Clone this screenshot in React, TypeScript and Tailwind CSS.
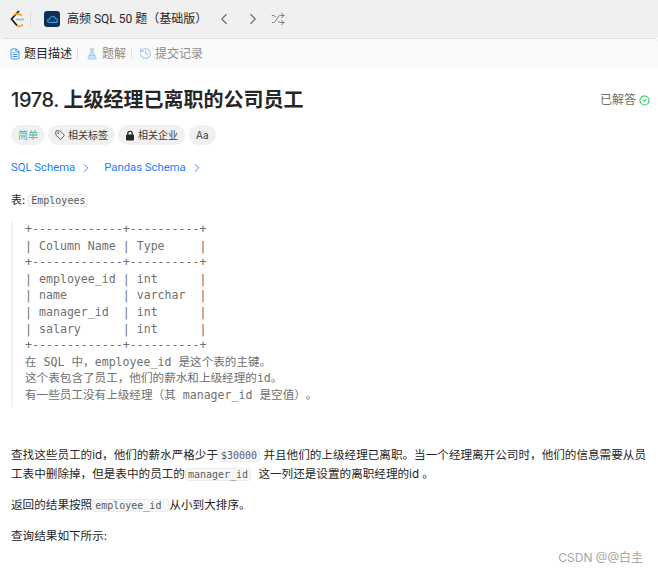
import { ChevronLeft, ChevronRight, Shuffle, Tag, FileText, FlaskConical, History, CircleCheck } from 'lucide-react';

const SANS = "font-['Inter','Noto_Sans_CJK_SC',sans-serif]";
const MONO = "font-['DejaVu_Sans_Mono','Noto_Sans_CJK_SC',monospace]";

function LeetcodeLogo() {
  return (
    <svg width="16" height="20" viewBox="0 0 16 20" fill="none" strokeWidth="1.7">
      <path d="M10 2 L2.5 10 L8 16.5" stroke="#1a1a1a" />
      <path d="M8 16.5 C10 18 12 17.5 14 15.5" stroke="#f89f1b" />
      <path d="M7 10.5 H15" stroke="#b3b3b3" />
      <path d="M5 6 C7 4.5 10 4.5 13 6.5" stroke="#f89f1b" />
    </svg>
  );
}

function PlanIcon() {
  return (
    <div className="flex h-4 w-4 items-center justify-center rounded-[3px] bg-[#0f2f55]">
      <svg width="13" height="10" viewBox="0 0 13 10" fill="none">
        <path d="M3.5 8.5 C1 8.5 1 5 3.5 5 C4 2 8.5 1.5 9.5 4.5 C12 4.5 12 8.5 9.5 8.5 Z" stroke="#29a9e1" strokeWidth="1.2" />
        <circle cx="5" cy="6.8" r="0.6" fill="#29a9e1" />
        <circle cx="8" cy="6.8" r="0.6" fill="#29a9e1" />
      </svg>
    </div>
  );
}

function LockIcon() {
  return (
    <svg width="10" height="11" viewBox="0 0 10 11" fill="none">
      <path d="M2.8 5 V3.4 C2.8 0.8 7.2 0.8 7.2 3.4 V5" stroke="#262626" strokeWidth="1.3" />
      <rect x="1" y="4.6" width="8" height="6" rx="1" fill="#262626" />
    </svg>
  );
}

function TopBar() {
  return (
    <div className="flex h-[38px] items-center bg-[#f0f0f0] pl-[9px]">
      <LeetcodeLogo />
      <div className="ml-[5px] h-[14px] w-px bg-[#dcdcdc]" />
      <div className="ml-[13px]"><PlanIcon /></div>
      <span className="ml-[7px] w-[132px] font-['Roboto','Noto_Sans_CJK_SC',sans-serif] text-xs whitespace-nowrap text-[#262626]">高频 SQL 50 题（基础版）</span>
      <ChevronLeft className="ml-[16px] text-[#6b6b6b]" size={18} strokeWidth={1.5} />
      <ChevronRight className="ml-[11px] text-[#6b6b6b]" size={18} strokeWidth={1.5} />
      <Shuffle className="ml-[9px] text-[#6b6b6b]" size={14} strokeWidth={1.5} />
    </div>
  );
}

function TabBar() {
  return (
    <div className="flex h-[30px] items-center rounded-t-[4px] border-t border-[#e0e0e0] bg-[#fafafa] pl-[9px] text-xs">
      <FileText size={12} className="text-[#3b93f0]" strokeWidth={2} />
      <span className="ml-[3px] text-[#262626]">题目描述</span>
      <div className="ml-[5px] h-[11px] w-px bg-[#e0e0e0]" />
      <FlaskConical size={12} fill="#cfe2f8" className="ml-[8px] text-[#a5c9f3]" strokeWidth={2} />
      <span className="ml-[4px] text-[#8c8c8c]">题解</span>
      <div className="ml-[5px] h-[11px] w-px bg-[#e0e0e0]" />
      <History size={13} className="ml-[7px] text-[#a5c9f3]" strokeWidth={2} />
      <span className="ml-[3px] text-[#8c8c8c]">提交记录</span>
    </div>
  );
}

function Pill({ children, className }: { children: React.ReactNode; className?: string }) {
  return (
    <div className={`flex h-5 items-center gap-[3px] rounded-full bg-[#f0f0f0] px-[7px] text-[10px] text-[#3c3c3c] ${className ?? ''}`}>
      {children}
    </div>
  );
}

function Code({ children, className }: { children: React.ReactNode; className?: string }) {
  return (
    <code className={`${MONO} rounded-[3px] border border-[#ececec] bg-[#f7f7f8] px-[2px] text-[10px] text-[#5c5c5c] ${className ?? ''}`}>
      {children}
    </code>
  );
}

const schema = `+-------------+----------+
| Column Name | Type     |
+-------------+----------+
| employee_id | int      |
| name        | varchar  |
| manager_id  | int      |
| salary      | int      |
+-------------+----------+`;

export default function App() {
  return (
    <div className={`${SANS} relative h-[574px] w-[658px] overflow-hidden bg-white`}>
      <TopBar />
      <TabBar />

      <div className="px-[11px]">
        <div className="flex items-center justify-between pt-[19px]">
          <h1 className="text-xl leading-[26px] font-semibold text-[#262626]">
            <span className="font-medium tracking-[-0.4px]">1978. </span>上级经理已离职的公司员工
          </h1>
          <div className="mr-[-3px] flex items-center gap-[3px] text-xs text-[#6e6e6e]">
            已解答
            <CircleCheck size={11} className="text-[#22c55e]" strokeWidth={2.2} />
          </div>
        </div>

        <div className="mt-[12px] flex gap-[3px]">
          <Pill className="text-[#3fb5ad]">简单</Pill>
          <Pill><Tag size={10} strokeWidth={2} />相关标签</Pill>
          <Pill><LockIcon />相关企业</Pill>
          <Pill className="ml-[1px] text-[9px]">Aa</Pill>
        </div>

        <div className="mt-[15px] flex items-center font-['Roboto',sans-serif] text-[11.3px] leading-4 text-[#1a7ffb]">
          SQL Schema
          <ChevronRight size={14} className="ml-[4px]" strokeWidth={1.5} />
          <span className="ml-[11px]">Pandas Schema</span>
          <ChevronRight size={14} className="ml-[4px]" strokeWidth={1.5} />
        </div>

        <div className="mt-[15px] text-[11px] leading-[18px] text-[#262626]">
          表: <Code>Employees</Code>
        </div>

        <div className={`${MONO} mt-[11px] h-[186px] border-l-2 border-[#f0f0f0] pl-[12px] text-[11.6px] leading-[16.6px] text-[#707070] [text-spacing-trim:space-all]`}>
          <pre className={`${MONO} whitespace-pre`}>{schema}</pre>
          <div>在 SQL 中，employee_id 是这个表的主键。</div>
          <div>这个表包含了员工，他们的薪水和上级经理的id。</div>
          <div>有一些员工没有上级经理（其 manager_id 是空值）。</div>
        </div>

        <p className="mt-[39px] text-[11.6px] leading-[18px] text-[#262626]">
          查找这些员工的id，他们的薪水严格少于<Code>$30000</Code> 并且他们的上级经理已离职。当一个经理离开公司时，他们的信息需要从员工表中删除掉，但是表中的员工的<Code className="mr-[4px]">manager_id</Code> 这一列还是设置的离职经理的id 。
        </p>
        <p className="mt-[12px] text-[11.6px] leading-[18px] text-[#262626]">
          返回的结果按照<Code className="pr-[7px]">employee_id</Code>从小到大排序。
        </p>
        <p className="mt-[12px] text-[11.6px] leading-[18px] text-[#262626]">查询结果如下所示:</p>
      </div>

      <div className="absolute right-[15px] bottom-[8px] text-xs leading-4 text-[#a6a6a6]">CSDN @@白圭</div>
    </div>
  );
}
